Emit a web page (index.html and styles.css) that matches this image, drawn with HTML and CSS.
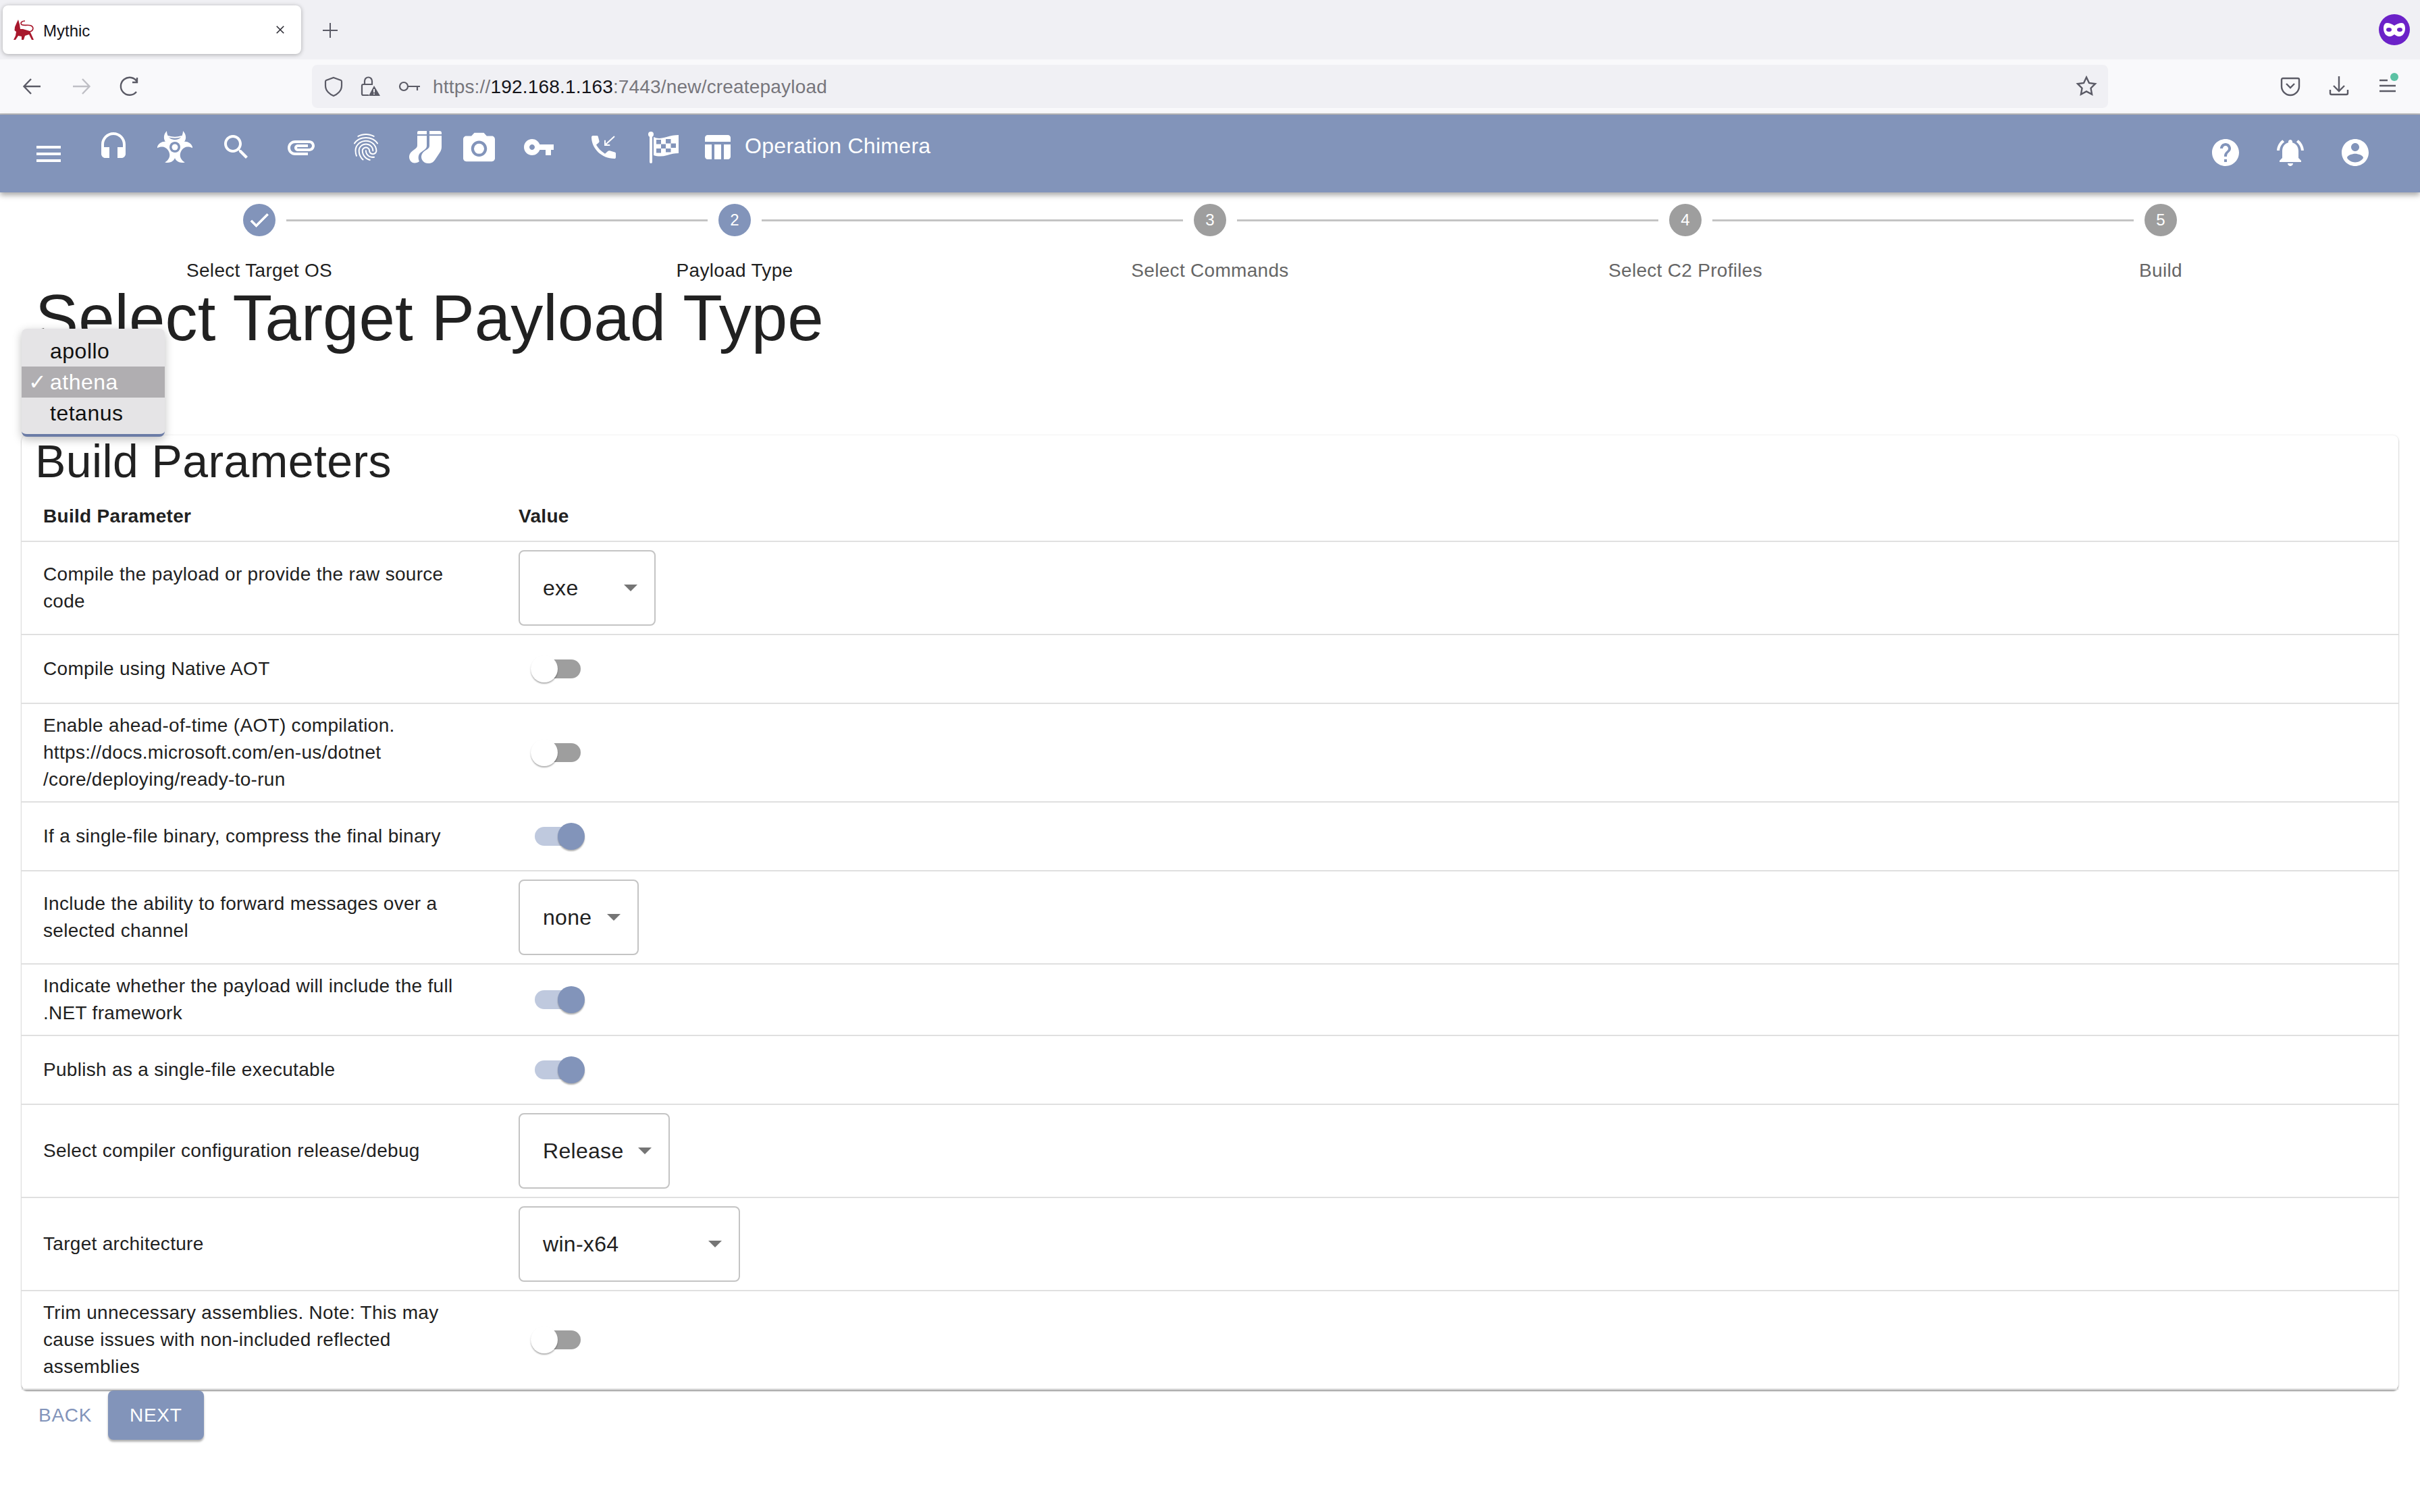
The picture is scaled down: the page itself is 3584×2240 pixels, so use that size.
FILE: index.html
```html
<!DOCTYPE html>
<html lang="en">
<head>
  <meta charset="UTF-8">
  <title>Mythic</title>
  <link rel="stylesheet" href="styles.css">
</head>
<body>

  <div class="tab-strip">
    <div class="tab">
      <svg class="favicon" viewBox="0 0 32 32"><path d="M8 1L6 5 3 12l-.5 5L5 19l-1 6-3 6h3l4-6 5 1v5h3l2-6 6-2 4 8h3l-4-9-2-4-10-3h-4l-1-7z"/><path class="fav-tail" d="M25 19c5-1 7-6 2-9-5-2-12 1-14.500-2C11 5 14 3 18 3"/></svg>
      <span class="tab-title">Mythic</span>
      <svg class="tab-close" viewBox="0 0 16 16"><path d="M2 2l12 12M14 2L2 14"/></svg>
    </div>
    <svg class="new-tab" viewBox="0 0 24 24"><path d="M12 1v22M1 12h22"/></svg>
    <svg class="mask" viewBox="0 0 46 46"><circle cx="23" cy="23" r="23" fill="#6b21c8"/><path fill="#fff" d="M12 13c4 0 8 2 11 4 3-2 7-4 11-4 3 0 5 3 5 8 0 7-4 12-9 12-3 0-5-2-7-3-2 1-4 3-7 3-5 0-9-5-9-12 0-5 2-8 5-8z"/><ellipse cx="15" cy="23" rx="4" ry="3" fill="#6b21c8"/><ellipse cx="31" cy="23" rx="4" ry="3" fill="#6b21c8"/></svg>
  </div>

  <div class="nav-bar">
    <svg class="tool" viewBox="0 0 32 32"><path d="M28 16H4M14 5L3.500 16 14 27"/></svg>
    <svg class="tool tool-off" viewBox="0 0 32 32"><path d="M4 16h24M18 5l10.500 11L18 27"/></svg>
    <svg class="tool" viewBox="0 0 32 32"><path d="M26 24a13 13 0 1 1 1-15M27 3v7h-7"/></svg>
    <div class="url-bar">
      <svg class="url-icon" viewBox="0 0 32 32"><path d="M16 3l11 4c1 .5 1 1 1 2v6c0 8-7 13-12 15-5-2-12-7-12-15V9c0-1 0-1.500 1-2z"/></svg>
      <svg class="url-icon" viewBox="0 0 32 32"><path d="M8 13V8a5.500 5.500 0 0 1 11 0v5M14 29H6a2 2 0 0 1-2-2V15a2 2 0 0 1 2-2h14"/><path class="solid" d="M22 15l9 15H14z"/><path class="mark" d="M22 20v5M22 26.500v1.500"/></svg>
      <svg class="url-icon url-key" viewBox="0 0 34 20"><circle cx="8" cy="10" r="6"/><path d="M14 10h18M28 10v6"/></svg>
      <span class="url-text">https://<b>192.168.1.163</b>:7443/new/createpayload</span>
      <svg class="url-star" viewBox="0 0 32 32"><path d="M16 2.500l4 8.500 9 1.200-6.500 6.400 1.600 9.200L16 23.400l-8.100 4.400 1.600-9.200L3 12.200l9-1.200z"/></svg>
    </div>
    <svg class="tool" viewBox="0 0 32 32"><path d="M5 4h22a2 2 0 0 1 2 2v10c0 7-6 13-13 13S3 23 3 16V6a2 2 0 0 1 2-2zM10 12l6 6 6-6"/></svg>
    <svg class="tool" viewBox="0 0 32 32"><path d="M16 1v22M8 15l8 8 8-8M3 21v5a2 2 0 0 0 2 2h22a2 2 0 0 0 2-2v-5"/></svg>
    <div class="menu-tool">
      <svg class="tool" viewBox="0 0 32 32"><path d="M4 7h12M4 15h24M4 23h24"/></svg>
      <span class="update-dot"></span>
    </div>
  </div>

  <header class="app-bar">
    <svg class="bar-icon ic-menu" viewBox="3 0 18 24"><path d="M3 18h18v-2H3v2zm0-5h18v-2H3v2zm0-7v2h18V6H3z"/></svg>
    <svg class="bar-icon ic-headset" viewBox="3 0 18 24"><path d="M12 1c-4.970 0-9 4.030-9 9v7c0 1.660 1.340 3 3 3h3v-8H5v-2c0-3.870 3.130-7 7-7s7 3.130 7 7v2h-4v8h3c1.660 0 3-1.340 3-3v-7c0-4.970-4.030-9-9-9z"/></svg>
    <svg class="bar-icon ic-bio" viewBox="0 0 52 48">
      <path id="bio-arm" d="M14 0C7 7 9 18 19 20h14c10-2 12-13 5-20 0 7-4 13-12 13S14 7 14 0z"/>
      <use href="#bio-arm" transform="rotate(120 26 24)"/>
      <use href="#bio-arm" transform="rotate(240 26 24)"/>
      <path class="thin" d="M16 8c6 2 14 2 20 0"/>
      <circle class="bio-gap" cx="26" cy="24" r="8"/>
      <circle cx="26" cy="24" r="4.500"/>
    </svg>
    <svg class="bar-icon ic-search" viewBox="3 0 18 24"><path d="M15.500 14h-.79l-.28-.27C15.410 12.590 16 11.110 16 9.500 16 5.910 13.090 3 9.500 3S3 5.910 3 9.500 5.910 16 9.500 16c1.610 0 3.090-.59 4.230-1.570l.27.28v.79l5 4.990L20.490 19l-4.990-5zm-6 0C7.010 14 5 11.990 5 9.500S7.010 5 9.500 5 14 7.010 14 9.500 11.990 14 9.500 14z"/></svg>
    <svg class="bar-icon ic-clip" viewBox="2 0 20 24"><path d="M2 12.500C2 9.460 4.460 7 7.500 7H18c2.210 0 4 1.790 4 4s-1.790 4-4 4H9.500C8.120 15 7 13.880 7 12.500S8.120 10 9.500 10H17v2H9.410c-.55 0-.55 1 0 1H18c1.100 0 2-.9 2-2s-.9-2-2-2H7.500C5.570 9 4 10.570 4 12.500S5.570 16 7.500 16H17v2H7.500C4.460 18 2 15.540 2 12.500z"/></svg>
    <svg class="bar-icon ic-finger" viewBox="3 0 18 24"><path d="M17.810 4.470c-.08 0-.16-.02-.23-.06C15.660 3.420 14 3 12.010 3c-1.980 0-3.860.47-5.570 1.410-.24.13-.54.04-.68-.2-.13-.24-.04-.55.2-.68C7.820 2.520 9.860 2 12.010 2c2.130 0 3.990.47 6.030 1.520.25.13.34.43.21.67-.09.18-.26.28-.44.28zM3.500 9.720c-.1 0-.2-.03-.29-.09-.23-.16-.28-.47-.12-.7.99-1.400 2.250-2.500 3.750-3.270C9.980 4.040 14 4.030 17.150 5.650c1.500.77 2.760 1.860 3.750 3.250.16.22.11.54-.12.7-.23.16-.54.11-.7-.12-.9-1.260-2.040-2.250-3.390-2.940-2.870-1.470-6.540-1.470-9.400.01-1.360.7-2.500 1.700-3.400 2.960-.08.14-.23.21-.39.21zm6.250 12.070c-.13 0-.26-.05-.35-.15-.87-.87-1.340-1.430-2.010-2.640-.69-1.230-1.050-2.730-1.050-4.340 0-2.970 2.540-5.390 5.660-5.390s5.660 2.420 5.660 5.390c0 .28-.22.5-.5.5s-.5-.22-.5-.5c0-2.420-2.090-4.390-4.660-4.390s-4.660 1.970-4.660 4.390c0 1.440.32 2.770.93 3.850.64 1.150 1.080 1.640 1.850 2.420.19.2.19.51 0 .71-.11.1-.24.15-.37.15zm7.170-1.850c-1.190 0-2.240-.3-3.100-.89-1.490-1.010-2.380-2.650-2.380-4.390 0-.28.22-.5.5-.5s.5.22.5.5c0 1.410.72 2.740 1.940 3.560.71.48 1.540.71 2.540.71.24 0 .64-.03 1.040-.1.27-.05.53.13.58.41.05.27-.13.53-.41.58-.57.11-1.070.12-1.210.12zM14.910 22c-.04 0-.09-.01-.13-.02-1.590-.44-2.630-1.030-3.720-2.100-1.400-1.390-2.170-3.240-2.170-5.220 0-1.620 1.380-2.940 3.080-2.940s3.080 1.320 3.080 2.940c0 1.070.93 1.940 2.080 1.940s2.080-.87 2.080-1.940c0-3.770-3.250-6.830-7.250-6.830-2.840 0-5.440 1.580-6.610 4.030-.39.81-.59 1.760-.59 2.800 0 .78.07 2.010.67 3.610.1.26-.03.55-.29.64-.26.1-.55-.04-.64-.29-.49-1.310-.73-2.610-.73-3.960 0-1.200.23-2.290.68-3.240 1.330-2.790 4.280-4.600 7.510-4.600 4.550 0 8.250 3.510 8.250 7.830 0 1.620-1.380 2.940-3.080 2.940s-3.080-1.320-3.080-2.940c0-1.070-.93-1.940-2.080-1.940s-2.080.87-2.080 1.940c0 1.710.66 3.310 1.870 4.510.95.94 1.860 1.460 3.270 1.850.27.07.42.35.35.61-.05.23-.26.38-.47.38z"/></svg>
    <svg class="bar-icon ic-socks" viewBox="0 0 48 48"><path d="M12 2a2 2 0 0 1 2-2h12v5H12zM12 7h14v15c0 2-1 4-3 5.500L17 32c-4 3-4 9-2 13-1.500 1.500-4 2.500-7 2.500-5 0-8-4.500-8-9 0-4.500 3-7.500 5-9l4-3c2-1.500 3-3 3-5.500zM30 0h15a3 3 0 0 1 3 3v2H30zM30 7h18v17c0 4-2 7-4 10l-6 9c-2 3-5 5-10 5-6 0-10-5-10-9.500 0-4.500 3-7.500 5-9l4-2.500c2-1.500 3-3 3-5.500z"/></svg>
    <svg class="bar-icon ic-camera" viewBox="2 .8 20 20.400"><path d="M9 2L7.170 4H4c-1.100 0-2 .9-2 2v12c0 1.100.9 2 2 2h16c1.100 0 2-.9 2-2V6c0-1.100-.9-2-2-2h-3.170L15 2H9zm3 15c-2.760 0-5-2.240-5-5s2.240-5 5-5 5 2.240 5 5-2.240 5-5 5zm0-1.800a3.200 3.200 0 1 0 0-6.400 3.200 3.200 0 0 0 0 6.400z"/></svg>
    <svg class="bar-icon ic-key" viewBox="1 0 22 24"><path d="M12.650 10C11.830 7.670 9.610 6 7 6c-3.310 0-6 2.690-6 6s2.690 6 6 6c2.610 0 4.830-1.670 5.650-4H17v4h4v-4h2v-4H12.650zM7 14c-1.100 0-2-.9-2-2s.9-2 2-2 2 .9 2 2-.9 2-2 2z"/></svg>
    <svg class="bar-icon ic-phone" viewBox="0 0 38 48"><path d="M3 7h6c1 0 1.500.5 1.800 1.500l1.700 6.500c.2 1 -.2 1.800-1 2.500L8 20.500c3 5.500 7 9.500 13 13.200l4.500-3.900c.7-.6 1.500-.8 2.500-.5l7.500 2.200c1 .3 1.500 1 1.500 2V39c0 1.500-1 2-2 2C16 41 1 26 1 9c0-1 1-2 2-2z"/><path class="thin" d="M35 8L21 21M21 13.700V21h7.300"/></svg>
    <svg class="bar-icon ic-flag" viewBox="0 0 46 48"><circle cx="4" cy="5" r="4"/><path d="M2 5h4v41a2 2 0 0 1-4 0zM8 9c6 3 12 2 19 0 6-2 12-3 18-3v27c-6 0-11 1-17 3-7 2-14 2-20 0z"/><path class="flag-cell" d="M12 13h7v6.500h-7zM26 12h7.500v6.500H26zM19 19.500h7v6.500h-7zM33.500 18.500H41V25h-7.500zM12 26h7v6.500h-7zM26 26h7.500v5.500H26z"/></svg>
    <svg class="bar-icon ic-table" viewBox="3 0 19 24"><path d="M10 10.020h5V21h-5zM17 21h3c1.100 0 2-.9 2-2v-9h-5v11zm3-18H5c-1.100 0-2 .9-2 2v3h19V5c0-1.100-.9-2-2-2zM3 19c0 1.100.9 2 2 2h3V10H3v9z"/></svg>
    <span class="op-name">Operation Chimera</span>
    <div class="bar-right">
      <svg class="bar-icon" viewBox="0 0 24 24"><path d="M12 2C6.480 2 2 6.480 2 12s4.480 10 10 10 10-4.480 10-10S17.520 2 12 2zm1 17h-2v-2h2v2zm2.070-7.750l-.9.920C13.450 12.900 13 13.500 13 15h-2v-.5c0-1.100.45-2.100 1.170-2.830l1.240-1.260c.37-.36.59-.86.59-1.410 0-1.100-.9-2-2-2s-2 .9-2 2H8c0-2.210 1.790-4 4-4s4 1.790 4 4c0 .88-.36 1.680-.93 2.250z"/></svg>
      <svg class="bar-icon" viewBox="0 0 24 24"><path d="M7.580 4.080L6.150 2.650C3.750 4.480 2.170 7.300 2.030 10.500h2c.15-2.650 1.510-4.970 3.550-6.420zm12.390 6.420h2c-.15-3.200-1.730-6.020-4.120-7.850l-1.420 1.430c2.020 1.450 3.390 3.770 3.540 6.420zM18 11c0-3.070-1.640-5.640-4.500-6.320V4c0-.83-.67-1.500-1.500-1.500s-1.500.67-1.500 1.500v.68C7.630 5.360 6 7.920 6 11v5l-2 2v1h16v-1l-2-2v-5zm-6 11c.14 0 .27-.01.4-.04.65-.14 1.180-.58 1.440-1.180.1-.24.15-.5.15-.78h-4c.01 1.100.9 2 2.010 2z"/></svg>
      <svg class="bar-icon" viewBox="0 0 24 24"><path d="M12 2C6.480 2 2 6.480 2 12s4.480 10 10 10 10-4.480 10-10S17.520 2 12 2zm0 3c1.660 0 3 1.340 3 3s-1.340 3-3 3-3-1.340-3-3 1.340-3 3-3zm0 14.200c-2.500 0-4.710-1.280-6-3.220.03-1.990 4-3.080 6-3.080 1.990 0 5.970 1.090 6 3.080-1.290 1.940-3.500 3.220-6 3.220z"/></svg>
    </div>
  </header>

  <main class="page">
    <div class="stepper">
      <div class="step step-on">
        <div class="step-head">
          <span class="step-line line-none"></span>
          <span class="step-dot"><svg viewBox="0 0 24 24"><path d="M9 16.200L4.800 12l-1.400 1.400L9 19 21 7l-1.400-1.400z"/></svg></span>
          <span class="step-line"></span>
        </div>
        <div class="step-label">Select Target OS</div>
      </div>
      <div class="step step-on">
        <div class="step-head">
          <span class="step-line"></span>
          <span class="step-dot">2</span>
          <span class="step-line"></span>
        </div>
        <div class="step-label">Payload Type</div>
      </div>
      <div class="step">
        <div class="step-head">
          <span class="step-line"></span>
          <span class="step-dot">3</span>
          <span class="step-line"></span>
        </div>
        <div class="step-label">Select Commands</div>
      </div>
      <div class="step">
        <div class="step-head">
          <span class="step-line"></span>
          <span class="step-dot">4</span>
          <span class="step-line"></span>
        </div>
        <div class="step-label">Select C2 Profiles</div>
      </div>
      <div class="step">
        <div class="step-head">
          <span class="step-line"></span>
          <span class="step-dot">5</span>
          <span class="step-line line-none"></span>
        </div>
        <div class="step-label">Build</div>
      </div>
    </div>

    <h2 class="page-title">Select Target Payload Type</h2>

    <ul class="listbox">
      <li>apollo</li>
      <li class="picked">athena</li>
      <li>tetanus</li>
    </ul>

    <section class="card">
      <h4 class="card-title">Build Parameters</h4>
      <table class="params">
        <thead>
          <tr><th class="col-name">Build Parameter</th><th>Value</th></tr>
        </thead>
        <tbody>
          <tr>
            <td>Compile the payload or provide the raw source code</td>
            <td><div class="select sel-exe"><span>exe</span><i class="caret"></i></div></td>
          </tr>
          <tr>
            <td>Compile using Native AOT</td>
            <td><div class="switch"><span class="track"></span><span class="thumb"></span></div></td>
          </tr>
          <tr>
            <td>Enable ahead-of-time (AOT) compilation.<br>https://docs.microsoft.com/en-us/dotnet<br>/core/deploying/ready-to-run</td>
            <td><div class="switch"><span class="track"></span><span class="thumb"></span></div></td>
          </tr>
          <tr>
            <td>If a single-file binary, compress the final binary</td>
            <td><div class="switch on"><span class="track"></span><span class="thumb"></span></div></td>
          </tr>
          <tr>
            <td>Include the ability to forward messages over a selected channel</td>
            <td><div class="select sel-none"><span>none</span><i class="caret"></i></div></td>
          </tr>
          <tr>
            <td>Indicate whether the payload will include the full .NET framework</td>
            <td><div class="switch on"><span class="track"></span><span class="thumb"></span></div></td>
          </tr>
          <tr>
            <td>Publish as a single-file executable</td>
            <td><div class="switch on"><span class="track"></span><span class="thumb"></span></div></td>
          </tr>
          <tr>
            <td>Select compiler configuration release/debug</td>
            <td><div class="select sel-release"><span>Release</span><i class="caret"></i></div></td>
          </tr>
          <tr>
            <td>Target architecture</td>
            <td><div class="select sel-arch"><span>win-x64</span><i class="caret"></i></div></td>
          </tr>
          <tr>
            <td>Trim unnecessary assemblies. Note: This may cause issues with non-included reflected assemblies</td>
            <td><div class="switch"><span class="track"></span><span class="thumb"></span></div></td>
          </tr>
        </tbody>
      </table>
    </section>

    <div class="actions">
      <button class="btn-back">BACK</button>
      <button class="btn-next">NEXT</button>
    </div>
  </main>

</body>
</html>
```

FILE: styles.css
```css
* {
  box-sizing: border-box;
}

html,
body {
  margin: 0;
  padding: 0;
  height: 2240px;
  overflow: hidden;
  background-color: #fff;
  font-family: "Liberation Sans", Arial, sans-serif;
  color: #212121;
}

/* browser chrome */
.tab-strip {
  height: 88px;
  background-color: #f0f0f4;
  display: flex;
  align-items: center;
  padding: 0 15px 0 4px;
}

.tab {
  width: 442px;
  height: 72px;
  background-color: #fff;
  border-radius: 8px;
  box-shadow: 0 1px 6px rgba(0, 0, 0, 0.3);
  display: flex;
  align-items: center;
  padding: 0 24px 0 15px;
}

.favicon {
  width: 32px;
  height: 32px;
  fill: #a8182c;
}

.fav-tail {
  fill: none;
  stroke: #a8182c;
  stroke-width: 1.6;
}

.tab-title {
  font-size: 24px;
  margin: 3px 0 0 13px;
  color: #15141a;
}

.tab-close {
  width: 14px;
  height: 14px;
  margin-left: auto;
  fill: none;
  stroke: #2b2a33;
  stroke-width: 1.8;
}

.new-tab {
  width: 24px;
  height: 24px;
  margin: 2px 0 0 31px;
  fill: none;
  stroke: #5b5b66;
  stroke-width: 2;
}

.mask {
  width: 46px;
  height: 60px;
  margin-left: auto;
}

.nav-bar {
  height: 82px;
  padding: 8px 32px 8px 32px;
  background-color: #f9f9fb;
  border-bottom: 2px solid #b9b9bb;
  display: flex;
  align-items: center;
}

.tool {
  display: block;
  flex: none;
  width: 32px;
  height: 32px;
  fill: none;
  stroke: #5b5b66;
  stroke-width: 2.4;
  margin-right: 40px;
}

.tool-off {
  stroke: #bfbfc5;
}

.url-bar {
  width: 2660px;
  height: 64px;
  margin: 0 254px 0 214px;
  background-color: #f0f0f4;
  border-radius: 8px;
  display: flex;
  align-items: center;
  padding: 0 16px;
  flex: none;
}

.url-icon {
  width: 32px;
  height: 34px;
  margin-right: 22px;
  fill: none;
  stroke: #5b5b66;
  stroke-width: 2.200;
}

.url-icon .solid {
  fill: #5b5b66;
  stroke: none;
}

.url-icon .mark {
  stroke: #f0f0f4;
  stroke-width: 2;
}

.url-key {
  width: 34px;
  margin-left: 4px;
  margin-right: 17px;
}

.url-text {
  font-size: 28px;
  letter-spacing: 0.18px;
  padding-top: 2px;
  color: #77767c;
}

.url-text b {
  font-weight: normal;
  color: #15141a;
}

.url-star {
  width: 32px;
  height: 32px;
  margin-left: auto;
  fill: none;
  stroke: #5b5b66;
  stroke-width: 2.400;
}

.menu-tool {
  position: relative;
  height: 32px;
}

.menu-tool .tool {
  margin-right: 0;
}

.update-dot {
  position: absolute;
  top: -4px;
  right: 0;
  width: 12px;
  height: 12px;
  border-radius: 50%;
  background-color: #5cc2a4;
}

/* app bar */
.app-bar {
  height: 115px;
  background-color: #8294ba;
  box-shadow: 0 4px 8px rgba(0, 0, 0, 0.35);
  display: flex;
  align-items: flex-start;
  padding: 24px 72px 0 54px;
  color: #fff;
  position: relative;
}

.bar-icon {
  display: block;
  height: 48px;
  fill: #fff;
  flex: none;
}

.bar-icon .thin {
  fill: none;
  stroke: #fff;
  stroke-width: 2;
}

.bio-gap {
  fill: #8294ba;
}

.flag-cell {
  fill: #8294ba;
}

.ic-menu { width: 36px; margin-top: 10px; }
.ic-headset { width: 36px; margin-left: 60px; }
.ic-bio { width: 52px; margin-left: 47px; }
.ic-search { width: 36px; margin-left: 47px; }
.ic-clip { width: 40px; margin-left: 58px; }
.ic-finger { width: 36px; margin-left: 58px; }
.ic-socks { width: 48px; margin-left: 46px; }
.ic-camera { width: 47px; margin-left: 32px; }
.ic-key { width: 44px; margin-left: 43px; }
.ic-phone { width: 38px; margin-left: 55px; }
.ic-flag { width: 46px; margin-left: 47px; }
.ic-table { width: 38px; margin-left: 38px; }

.op-name {
  font-size: 32px;
  line-height: 44px;
  margin-left: 21px;
  letter-spacing: 0.3px;
}

.bar-right {
  margin-left: auto;
  display: flex;
  gap: 48px;
  padding-top: 8px;
}

/* stepper */
.page {
  padding: 0 32px;
  position: relative;
}

.stepper {
  display: flex;
  padding-top: 17px;
}

.step {
  flex: 1;
  color: #666;
}

.step-on {
  color: #212121;
}

.step-head {
  display: flex;
  align-items: center;
  gap: 16px;
}

.step-line {
  flex: 1;
  height: 3px;
  background-color: #c4c4c4;
}

.line-none {
  background-color: transparent;
}

.step-dot {
  width: 48px;
  height: 48px;
  border-radius: 50%;
  background-color: #9e9e9e;
  color: #fff;
  font-size: 24px;
  display: flex;
  align-items: center;
  justify-content: center;
}

.step-on .step-dot {
  background-color: #8294ba;
}

.step-dot svg {
  width: 36px;
  height: 36px;
  fill: #fff;
  stroke: #fff;
  stroke-width: 0.6;
}

.step-label {
  font-size: 28px;
  line-height: 40px;
  letter-spacing: 0.3px;
  text-align: center;
  margin-top: 31px;
}

.page-title {
  font-size: 96px;
  line-height: 96px;
  font-weight: normal;
  letter-spacing: 0.1px;
  margin: 2px 0 126px 20px;
}

/* native select popup, open over the heading */
.listbox {
  position: absolute;
  top: 202px;
  left: 32px;
  width: 212px;
  height: 160px;
  margin: 0;
  padding: 10px 0 0;
  list-style: none;
  background-color: #e5e4e6;
  border-radius: 8px;
  border-bottom: 4px solid #6b7ca6;
  box-shadow: 0 4px 14px rgba(0, 0, 0, 0.25);
  font-size: 32px;
  line-height: 46px;
  letter-spacing: 0.5px;
  color: #111;
}

.listbox li {
  padding-left: 42px;
}

.listbox .picked {
  position: relative;
  background-color: #b0aeb1;
  color: #fff;
}

.listbox .picked::before {
  content: "\2713";
  position: absolute;
  left: 10px;
  font-family: "DejaVu Sans", sans-serif;
  font-size: 32px;
}

/* parameters */
.card {
  background-color: #fff;
  border-radius: 8px;
  box-shadow: 0 2px 2px rgba(0, 0, 0, 0.35), 0 0 3px rgba(0, 0, 0, 0.12);
  padding-top: 4px;
}

.card-title {
  font-size: 68px;
  line-height: 68px;
  font-weight: normal;
  letter-spacing: 0.4px;
  margin: 0 0 0 20px;
}

.params {
  width: 100%;
  table-layout: fixed;
  border-collapse: separate;
  border-spacing: 0;
  font-size: 28px;
  line-height: 40px;
  letter-spacing: 0.3px;
}

.col-name {
  width: 704px;
}

.params th {
  text-align: left;
  padding: 28px 32px 16px;
  border-bottom: 2px solid #e0e0e0;
}

.params td {
  padding: 12px 32px;
  border-bottom: 2px solid #e0e0e0;
  vertical-align: middle;
}

.select {
  height: 112px;
  border: 2px solid #c4c4c4;
  border-radius: 8px;
  padding: 0 25px 0 34px;
  font-size: 32px;
  display: flex;
  align-items: center;
  justify-content: space-between;
}

.sel-exe { width: 203px; }
.sel-none { width: 178px; }
.sel-release { width: 224px; }
.sel-arch { width: 328px; }

.caret {
  border-left: 10px solid transparent;
  border-right: 10px solid transparent;
  border-top: 10px solid #757575;
}

.switch {
  position: relative;
  width: 116px;
  height: 76px;
  padding: 24px;
}

.track {
  display: block;
  height: 28px;
  border-radius: 14px;
  background-color: #9e9e9e;
}

.thumb {
  position: absolute;
  top: 18px;
  left: 18px;
  width: 40px;
  height: 40px;
  border-radius: 50%;
  background-color: #fff;
  box-shadow: 0 2px 2px rgba(0, 0, 0, 0.3);
}

.on .track {
  background-color: #bfc9de;
}

.on .thumb {
  left: 58px;
  background-color: #8294ba;
}

.actions {
  display: flex;
  align-items: flex-start;
  padding-top: 1px;
}

.actions button {
  font-family: inherit;
  font-size: 28px;
  height: 73px;
  border: 0;
  border-radius: 8px;
  letter-spacing: 0.7px;
}

.btn-back {
  background: none;
  color: #8294ba;
  padding: 0 16px;
  margin: 0 8px 0 9px;
}

.btn-next {
  background-color: #8294ba;
  color: #fff;
  padding: 0 32px;
  box-shadow: 0 3px 3px rgba(0, 0, 0, 0.3);
}
```
